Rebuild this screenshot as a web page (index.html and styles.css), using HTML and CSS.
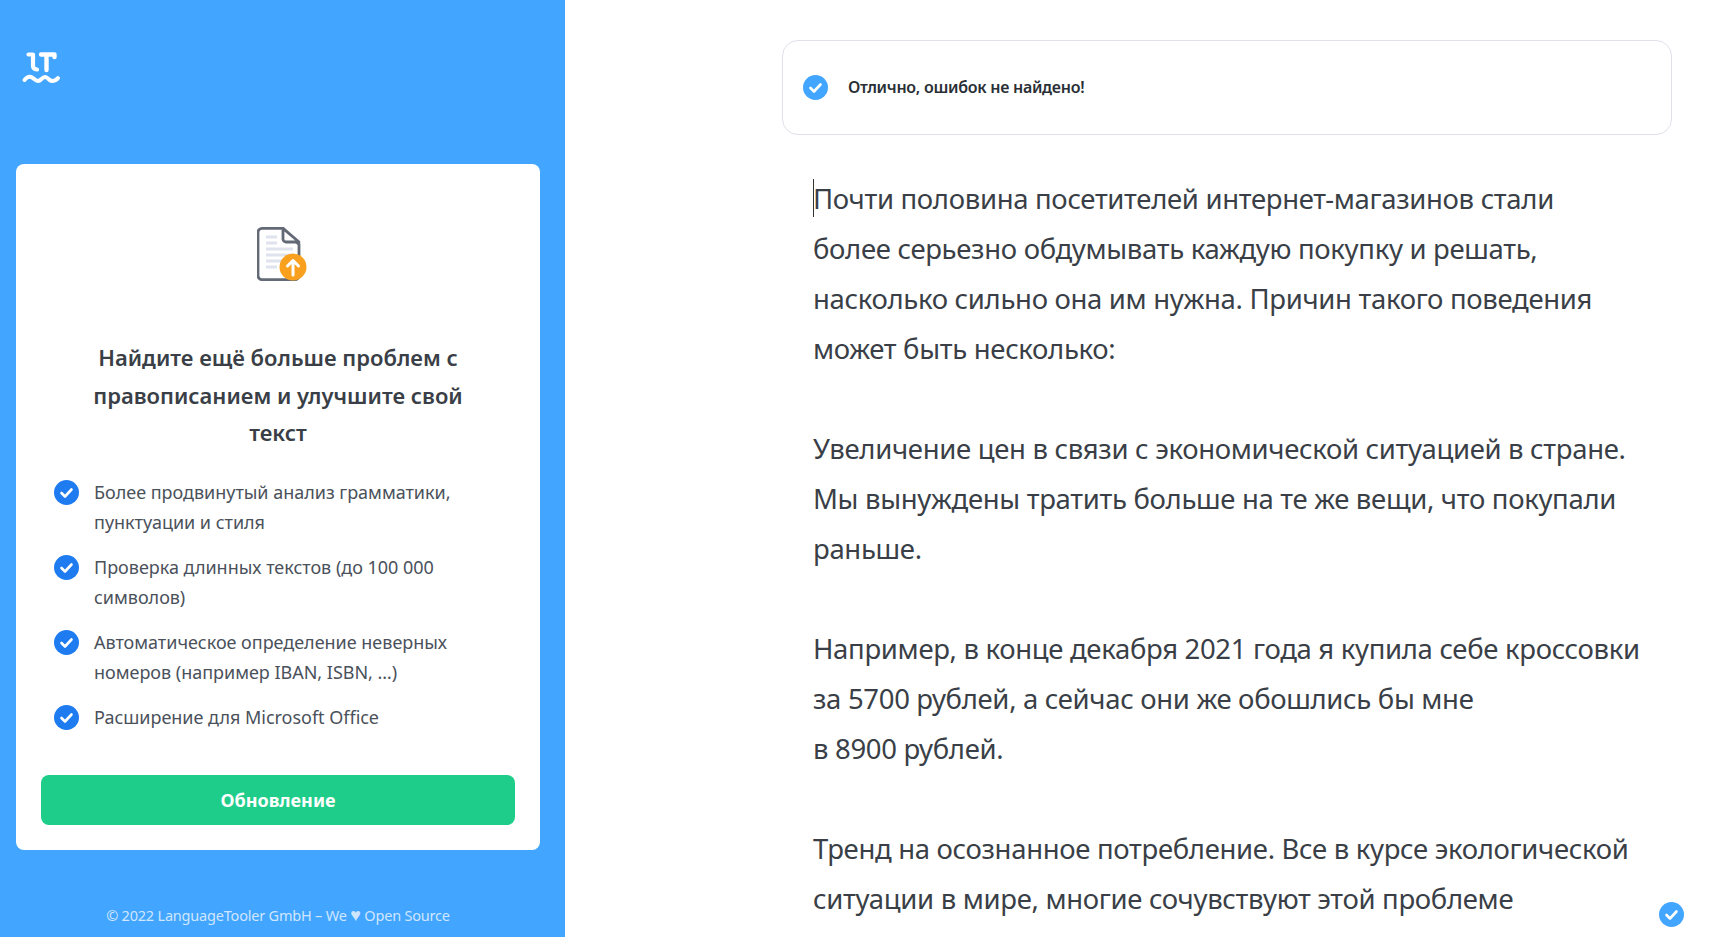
FILE: index.html
```html
<!DOCTYPE html>
<html lang="ru">
<head>
<meta charset="utf-8">
<title>LanguageTool</title>
<link rel="stylesheet" href="styles.css">
</head>
<body>
<div class="app">
  <aside class="sidebar">
    <div class="logo">
      <svg width="40" height="34" viewBox="0 0 40 34" fill="none" stroke="#fff" stroke-linejoin="round">
        <path d="M7.500 3.500h4.500V15q0 3 4 3.500" stroke-width="4.200" stroke-linecap="round"/>
        <path d="M20 3.500H33.500V6M25.500 3.500V19" stroke-width="4.400" stroke-linecap="round"/>
        <path d="M3.500 29C6 26 8 25.500 10 26C13 27 14 30 17 30C20 30 21 26 24 26C27 26 28 30 31 30C34 30 35.500 29 37 27" stroke-width="4" stroke-linecap="round"/>
      </svg>
    </div>
    <section class="card">
      <svg class="doc" width="50" height="56" viewBox="0 0 50 56" fill="none">
        <path d="M5 2.400h21l16 16V49.600a4 4 0 0 1-4 4H5a4 4 0 0 1-4-4V6.400a4 4 0 0 1 4-4z" fill="#fff" stroke="#636a76" stroke-width="2.800"/>
        <path d="M26 2.400V13a3 3 0 0 0 3 3h13z" fill="#fff" stroke="#636a76" stroke-width="2.800" stroke-linejoin="round"/>
        <path d="M9 11h11M9 17h11M9 23h27M9 29h27M9 35h20M9 41h11" stroke="#dfe3ee" stroke-width="3"/>
        <circle cx="36" cy="41" r="13.500" fill="#f9a11f"/>
        <path d="M36 49V34.500M30.500 40l5.500-5.500 5.500 5.500" stroke="#fff" stroke-width="3" stroke-linecap="round" stroke-linejoin="round"/>
      </svg>
      <h2 class="headline">Найдите ещё больше проблем с правописанием и улучшите свой текст</h2>
      <ul class="features">
        <li class="feature"><svg class="tick" viewBox="0 0 25 25"><circle cx="12.500" cy="12.500" r="12.500" fill="#1f7bf0"/><path d="M7.500 13l3.500 3.500 6.500-7" fill="none" stroke="#fff" stroke-width="2.600" stroke-linecap="round" stroke-linejoin="round"/></svg><span>Более продвинутый анализ грамматики, пунктуации и стиля</span></li>
        <li class="feature"><svg class="tick" viewBox="0 0 25 25"><circle cx="12.500" cy="12.500" r="12.500" fill="#1f7bf0"/><path d="M7.500 13l3.500 3.500 6.500-7" fill="none" stroke="#fff" stroke-width="2.600" stroke-linecap="round" stroke-linejoin="round"/></svg><span>Проверка длинных текстов (до 100 000 символов)</span></li>
        <li class="feature"><svg class="tick" viewBox="0 0 25 25"><circle cx="12.500" cy="12.500" r="12.500" fill="#1f7bf0"/><path d="M7.500 13l3.500 3.500 6.500-7" fill="none" stroke="#fff" stroke-width="2.600" stroke-linecap="round" stroke-linejoin="round"/></svg><span>Автоматическое определение неверных номеров (например IBAN, ISBN, …)</span></li>
        <li class="feature"><svg class="tick" viewBox="0 0 25 25"><circle cx="12.500" cy="12.500" r="12.500" fill="#1f7bf0"/><path d="M7.500 13l3.500 3.500 6.500-7" fill="none" stroke="#fff" stroke-width="2.600" stroke-linecap="round" stroke-linejoin="round"/></svg><span>Расширение для Microsoft Office</span></li>
      </ul>
      <button class="upgrade">Обновление</button>
    </section>
    <footer class="copyright">© 2022 LanguageTooler GmbH – We <span class="heart">♥</span> Open Source</footer>
  </aside>
  <main class="main">
    <div class="status">
      <svg class="tick" viewBox="0 0 25 25"><circle cx="12.500" cy="12.500" r="12.500" fill="#42a5ff"/><path d="M7.500 13l3.500 3.500 6.500-7" fill="none" stroke="#fff" stroke-width="2.600" stroke-linecap="round" stroke-linejoin="round"/></svg>
      <span class="status-text">Отлично, ошибок не найдено!</span>
    </div>
    <div class="editor">
      <p class="para"><span class="caret"></span>Почти половина посетителей интернет-магазинов стали<br>более серьезно обдумывать каждую покупку и решать,<br>насколько сильно она им нужна. Причин такого поведения<br>может быть несколько:</p>
      <p class="para">Увеличение цен в связи с экономической ситуацией в стране.<br>Мы вынуждены тратить больше на те же вещи, что покупали<br>раньше.</p>
      <p class="para">Например, в конце декабря 2021 года я купила себе кроссовки<br>за 5700 рублей, а сейчас они же обошлись бы мне<br>в 8900 рублей.</p>
      <p class="para">Тренд на осознанное потребление. Все в курсе экологической<br>ситуации в мире, многие сочувствуют этой проблеме</p>
    </div>
    <svg class="float-tick" viewBox="0 0 25 25"><circle cx="12.500" cy="12.500" r="12.500" fill="#42a5ff"/><path d="M7.500 13l3.500 3.500 6.500-7" fill="none" stroke="#fff" stroke-width="2.600" stroke-linecap="round" stroke-linejoin="round"/></svg>
  </main>
</div>
</body>
</html>
```
FILE: styles.css
```css
* { box-sizing: border-box; }
html, body { margin: 0; height: 100%; overflow: hidden; background: #fff; }
body { font-family: "Noto Sans", "Open Sans", sans-serif; color: #32373f; }
.app { display: flex; height: 937px; }
.sidebar { width: 565px; flex: none; background: #42a5ff; padding: 51px 16px 0; display: flex; flex-direction: column; }
.logo { height: 113px; padding-left: 5px; }
.logo svg { display: block; }
.card { width: 524px; height: 686px; background: #fff; border-radius: 8px; padding: 62px 25px 0; display: flex; flex-direction: column; }
.doc { align-self: center; display: block; margin-left: 8px; }
.headline { margin: 57px 0 0; padding: 0 40px; font-size: 22px; line-height: 37.500px; font-weight: 600; text-align: center; color: #3a3f47; }
.features { list-style: none; margin: 25px 0 0; padding: 0 0 0 13px; display: flex; flex-direction: column; gap: 15px; }
.feature { display: flex; gap: 15px; font-size: 18px; line-height: 30px; letter-spacing: -0.02px; color: #4a515b; }
.tick { width: 25px; height: 25px; flex: none; display: block; margin-top: 3px; }
.upgrade { margin-top: 43px; height: 50px; border: 0; border-radius: 8px; background: #1ecd8a; color: #fff; font: 700 18px "Noto Sans", sans-serif; }
.copyright { width: 524px; margin-top: 54px; text-align: center; color: #cfe6ff; font-size: 14.500px; line-height: 22px; letter-spacing: -0.2px; }
.heart { font-size: 18px; line-height: 18px; }
.main { flex: 1; position: relative; padding: 40px 63px 0 217px; overflow: hidden; }
.status { height: 95px; border: 1px solid #e0e1ea; border-radius: 16px; display: flex; align-items: center; gap: 20px; padding-left: 20px; }
.status .tick { margin: 0; }
.status-text { font-size: 16px; font-weight: 600; letter-spacing: -0.28px; color: #2a2f36; padding-bottom: 2px; }
.editor { padding: 39px 0 0 31px; font-size: 27.500px; line-height: 50px; letter-spacing: -0.32px; color: #3a3f47; white-space: nowrap; }
.para { margin: 0 0 50px; position: relative; }
.caret { position: absolute; left: 0; top: 5px; width: 1px; height: 38px; background: #333; }
.float-tick { position: absolute; left: 1094px; top: 902px; width: 25px; height: 25px; }
```
